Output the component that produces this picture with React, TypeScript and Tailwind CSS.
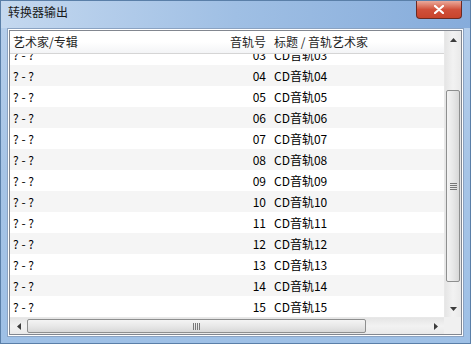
import React from "react";

const tracks = ["03", "04", "05", "06", "07", "08", "09", "10", "11", "12", "13", "14", "15"];

function Arrow({ dir }: { dir: "up" | "down" | "left" | "right" }) {
  const pts = {
    up: "0,4 3.5,0 7,4",
    down: "0,0 3.5,4 7,0",
    left: "4,0 0,3.5 4,7",
    right: "0,0 4,3.5 0,7",
  }[dir];
  const vertical = dir === "up" || dir === "down";
  return (
    <svg width={vertical ? 7 : 4} height={vertical ? 4 : 7} viewBox={vertical ? "0 0 7 4" : "0 0 4 7"}>
      <polygon points={pts} fill="#3c3c3c" />
    </svg>
  );
}

function VScroll() {
  return (
    <div className="w-[17px] h-full flex flex-col bg-gradient-to-r from-[#e5e5e5] via-[#f2f2f2] to-[#e9e9e9] border-l border-[#e8e8e8]">
      <div className="h-[17px] flex items-center justify-center">
        <Arrow dir="up" />
      </div>
      <div className="flex-1 flex flex-col px-[1px] pt-[42px] pb-[18px]">
        <div className="flex-1 rounded-[2px] border border-[#8e8f8f] bg-gradient-to-r from-[#f4f4f4] via-[#e8e8e8] to-[#d8d8d8] flex items-center justify-center">
          <div className="flex flex-col gap-[1px]">
            {[0, 1, 2, 3].map((i) => (
              <div key={i} className="w-[7px] h-[1px] bg-[#777]" />
            ))}
          </div>
        </div>
      </div>
      <div className="h-[17px] flex items-center justify-center">
        <Arrow dir="down" />
      </div>
    </div>
  );
}

function HScroll() {
  return (
    <div className="h-[17px] flex bg-gradient-to-b from-[#e5e5e5] via-[#f2f2f2] to-[#e9e9e9] border-t border-[#e8e8e8]">
      <div className="w-[17px] flex items-center justify-center">
        <Arrow dir="left" />
      </div>
      <div className="flex-1 flex py-[1px] pr-[61px]">
        <div className="flex-1 rounded-[2px] border border-[#8e8f8f] bg-gradient-to-b from-[#f4f4f4] via-[#e8e8e8] to-[#d8d8d8] flex items-center justify-center">
          <div className="flex gap-[1px]">
            {[0, 1, 2, 3].map((i) => (
              <div key={i} className="w-[1px] h-[7px] bg-[#777]" />
            ))}
          </div>
        </div>
      </div>
      <div className="w-[17px] flex items-center justify-center">
        <Arrow dir="right" />
      </div>
    </div>
  );
}

export default function App() {
  return (
    <div
      className="w-[471px] h-[344px] flex flex-col bg-gradient-to-b from-[#b8d0ec] via-[#a6c4e6] to-[#9ec0e6] border border-[#5a7fa8] overflow-hidden"
      style={{ fontFamily: '"Noto Sans CJK SC", "Liberation Sans", sans-serif' }}
    >
      {/* title bar */}
      <div className="h-[27px] flex items-start justify-between bg-gradient-to-r from-[#c4d8ef] via-[#9fbfe4] to-[#86acdb]">
        <span className="pl-[7px] pt-[3px] text-[12px] leading-[16px] text-[#1a1a1a]">转换器输出</span>
        <div className="mr-[8px] w-[46px] h-[18px] rounded-b-[4px] border border-t-0 border-[#6b2a22] bg-gradient-to-b from-[#e9a99b] via-[#d0503a] to-[#c8442c] flex items-center justify-center">
          <svg width="10" height="9" viewBox="0 0 10 9">
            <path d="M1 1 L9 8 M9 1 L1 8" stroke="#fff" strokeWidth="2.2" strokeLinecap="round" />
          </svg>
        </div>
      </div>

      {/* client */}
      <div className="flex-1 px-[6px] pb-[6px]">
        <div className="h-full bg-white border border-[#8ba3c2] p-[1px]">
          <div className="h-full border border-[#828790] flex flex-col">
            <div className="flex-1 flex min-h-0">
              <div className="flex-1 flex flex-col min-w-0 overflow-hidden">
                {/* header */}
                <div className="h-[23px] shrink-0 flex items-center border-b border-[#d5d5d5] bg-gradient-to-b from-white via-white to-[#f3f4f6] text-[12px] text-[#1e1e1e]">
                  <div className="w-[191px] pl-[3px]">艺术家/专辑</div>
                  <div className="w-[68px] text-right pr-[3px]">音轨号</div>
                  <div className="flex-1 pl-[5px] whitespace-nowrap">标题 / 音轨艺术家</div>
                </div>
                {/* rows */}
                <div className="flex-1 overflow-hidden">
                  <div className="-mt-[10px]">
                    {tracks.map((t, i) => (
                      <div
                        key={t}
                        className={`h-[21px] flex items-center text-[12px] text-black ${i % 2 === 1 ? "bg-[#f5f5f5]" : "bg-white"}`}
                      >
                        <div className="w-[191px] pl-[3px]">? - ?</div>
                        <div className="w-[68px] text-right pr-[3px]">{t}</div>
                        <div className="flex-1 pl-[5px] whitespace-nowrap">CD音轨{t}</div>
                      </div>
                    ))}
                  </div>
                </div>
              </div>
              <VScroll />
            </div>
            <div className="flex">
              <div className="flex-1">
                <HScroll />
              </div>
              <div className="w-[17px] h-[17px] bg-[#f0f0f0]" />
            </div>
          </div>
        </div>
      </div>
    </div>
  );
}
